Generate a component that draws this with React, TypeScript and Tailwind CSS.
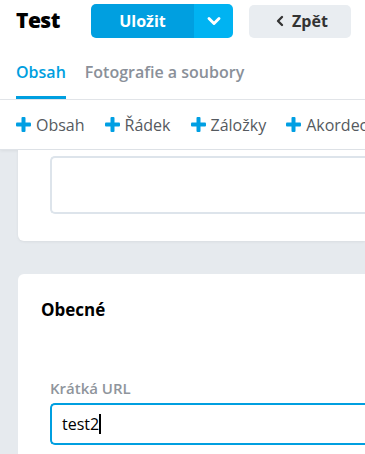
import { ChevronDown, ChevronLeft } from "lucide-react";

const PlusIcon = () => (
    <svg width="15" height="15" viewBox="0 0 15 15" className="shrink-0">
        <rect x="5.5" y="0" width="4" height="15" rx="1" fill="#009fe3" />
        <rect x="0" y="5.5" width="15" height="4" rx="1" fill="#009fe3" />
    </svg>
);

const toolbarItems = ["Obsah", "Řádek", "Záložky", "Akordeon"];

export default function App() {
    return (
        <div className="w-[365px] h-[454px] overflow-hidden bg-[#e6eaee] font-['Open_Sans',sans-serif]">
            {/* Header */}
            <div className="bg-white border-b border-[#e3e6ea] shadow-[0_1px_2px_rgba(0,0,0,0.05)]">
                <div className="flex items-center pl-4 pt-1 h-[38px]">
                    <span className="text-[21px] font-extrabold text-black tracking-tight w-[75px]">Test</span>
                    <div className="flex h-[34px] rounded-[5px] overflow-hidden">
                        <button className="w-[103px] bg-[#009fe0] text-white text-[16px] font-bold">Uložit</button>
                        <button className="w-[39px] bg-[#00b3f2] flex items-center justify-center">
                            <ChevronDown className="w-5 h-5 text-white" strokeWidth={3.5} />
                        </button>
                    </div>
                    <button className="ml-4 w-[102px] h-[33px] rounded-[5px] bg-[#e9edf1] text-[#333] text-[16px] font-bold flex items-center justify-center gap-[4px]">
                        <ChevronLeft className="w-4 h-4" strokeWidth={3.5} />
                        Zpět
                    </button>
                </div>
                <div className="flex gap-[19px] pl-4 mt-[23px]">
                    <div className="flex flex-col">
                        <span className="text-[16px] font-semibold text-[#009fe0] leading-[22px]">Obsah</span>
                        <div className="h-[3px] bg-[#009fe0] mt-[13px]" />
                    </div>
                    <span className="text-[16px] font-semibold text-[#8a9099] leading-[22px]">Fotografie a soubory</span>
                </div>
            </div>

            {/* Toolbar */}
            <div className="bg-white h-[50px] flex items-center gap-5 pl-4 whitespace-nowrap border-b border-[#dfe3e8] shadow-[0_1px_3px_rgba(0,0,0,0.06)]">
                {toolbarItems.map(item => (
                    <div key={item} className="flex items-center gap-[5px]">
                        <PlusIcon />
                        <span className="text-[16px] text-[#555a60]">{item}</span>
                    </div>
                ))}
            </div>

            {/* Content */}
            <div className="pl-[18px]">
                <div className="bg-white rounded-bl-[6px] pt-[6px] pb-[27px] pl-8 shadow-[0_1px_3px_rgba(0,0,0,0.06)]">
                    <div className="h-[58px] border-2 border-r-0 border-[#dde4eb] rounded-l-[5px]" />
                </div>

                <div className="bg-white rounded-tl-[6px] mt-[33px] pl-[23px] pt-[23px] h-[200px]">
                    <h2 className="text-[17px] font-bold text-black leading-[26px]">Obecné</h2>
                    <div className="pl-[9px] mt-[55px]">
                        <label className="block text-[15px] font-semibold text-[#8f959c] leading-[21px]">Krátká URL</label>
                        <div className="mt-[4px] h-[42px] border-2 border-r-0 border-[#009fe0] rounded-l-[5px] flex items-center pl-[10px]">
                            <span className="text-[16px] text-black">test2</span>
                            <span className="w-[2px] h-[20px] bg-black" />
                        </div>
                    </div>
                </div>
            </div>
        </div>
    );
}
